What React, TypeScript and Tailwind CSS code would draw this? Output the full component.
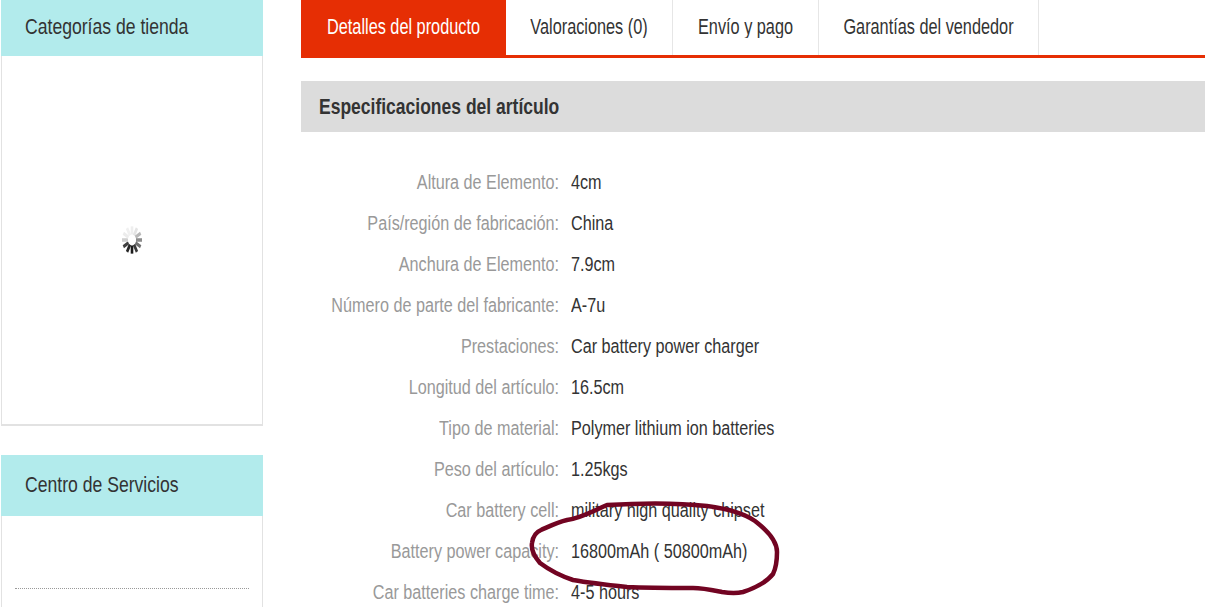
const specs = [
  ["Altura de Elemento:", "4cm"],
  ["País/región de fabricación:", "China"],
  ["Anchura de Elemento:", "7.9cm"],
  ["Número de parte del fabricante:", "A-7u"],
  ["Prestaciones:", "Car battery power charger"],
  ["Longitud del artículo:", "16.5cm"],
  ["Tipo de material:", "Polymer lithium ion batteries"],
  ["Peso del artículo:", "1.25kgs"],
  ["Car battery cell:", "military high quality chipset"],
  ["Battery power capacity:", "16800mAh ( 50800mAh)"],
  ["Car batteries charge time:", "4-5 hours"],
]

const tabs = [
  { label: "Detalles del producto", width: "w-[205px]", active: true },
  { label: "Valoraciones (0)", width: "w-[167px]" },
  { label: "Envío y pago", width: "w-[146px]" },
  { label: "Garantías del vendedor", width: "w-[220px]" },
]

const spinnerBars = [0, 30, 60, 90, 120, 150, 180, 210, 240, 270, 300, 330]
const spinnerShades = ["#eeeeee", "#e4e4e4", "#b8b8b8", "#8c8c8c", "#707070", "#3a3a3a", "#1c1c1c", "#262626", "#404040", "#d0d0d0", "#ececec", "#f0f0f0"]

function Spinner() {
  return (
    <svg width="22" height="30" viewBox="0 0 22 22" preserveAspectRatio="none">
      {spinnerBars.map((angle, i) => (
        <line
          key={angle}
          x1="11"
          y1="7"
          x2="11"
          y2="1"
          stroke={spinnerShades[i]}
          strokeWidth="2.6"
          transform={`rotate(${angle} 11 11)`}
        />
      ))}
    </svg>
  )
}

function SideHeader({ title, className }: { title: string; className: string }) {
  return (
    <div className={`${className} flex items-center bg-[#b2ebec] pl-[24px] text-[#333]`}>
      <span className="inline-block scale-y-[1.3] text-[17.6px]">{title}</span>
    </div>
  )
}

export default function App() {
  return (
    <div className="relative h-[607px] w-[1205px] overflow-hidden bg-white font-['Liberation_Sans',Arial,sans-serif]">
      <div className="flex">
        <aside className="ml-[1px] w-[262px] shrink-0">
          <div className="border-x border-b-2 border-[#e2e2e2]">
            <div className="-mx-px">
              <SideHeader title="Categorías de tienda" className="h-[56px] pb-[4px]" />
            </div>
            <div className="flex h-[368px] items-center justify-center">
              <Spinner />
            </div>
          </div>
          <div className="mt-[29px] h-[200px] border-x border-[#e2e2e2]">
            <div className="-mx-px">
              <SideHeader title="Centro de Servicios" className="h-[61px] pb-[2px]" />
            </div>
            <div className="mx-[13px] mt-[72px] border-t border-dotted border-[#999]" />
          </div>
        </aside>

        <main className="ml-[38px] min-w-0 flex-1">
          <div className="flex h-[58px] border-b-[3px] border-[#e62e04]">
            {tabs.map((tab) => (
              <div
                key={tab.label}
                className={`${tab.width} flex items-center justify-center pb-[2px] ${
                  tab.active ? "bg-[#e62e04] text-white" : "border-r border-[#e6e6e6] text-[#333]"
                }`}
              >
                <span className="inline-block scale-y-[1.3] text-[16.3px]">{tab.label}</span>
              </div>
            ))}
          </div>

          <div className="mt-[23px] flex h-[51px] items-center bg-[#dcdcdc] pb-[1px] pl-[18px] text-[#333]">
            <span className="inline-block scale-y-[1.3] text-[17.5px] font-bold">Especificaciones del artículo</span>
          </div>

          <div className="pt-[29px]">
            {specs.map(([label, value]) => (
              <div key={label} className="flex h-[41px] items-center text-[16.2px]">
                <div className="w-[258px] shrink-0 text-right text-[#999]">
                  <span className="inline-block origin-right scale-y-[1.3]">{label}</span>
                </div>
                <div className="ml-[12px] whitespace-nowrap text-[#333]">
                  <span className="inline-block scale-y-[1.3]">{value}</span>
                </div>
              </div>
            ))}
          </div>
        </main>
      </div>

      {/* hand drawn circle over the capacity row */}
      <svg className="absolute left-0 top-0" width="1205" height="607" viewBox="0 0 1205 607" fill="none">
        <path
          d="M607 505 C640 503 680 503 707 506 C730 509 745 514 755 521 C768 531 777 541 777 552 C777 562 776 568 773 574 C765 584 752 589 743 592 C735 594 728 593 722 592 C712 590 703 588 693 588 C670 588 648 588 627 587 C608 585 590 583 573 580 C558 575 548 569 540 563 C534 556 531 549 532 543 C533 536 536 532 541 530 C550 526 558 522 567 520 C582 518 595 510 607 505 Z"
          stroke="#720422"
          strokeWidth="4.5"
          strokeLinejoin="round"
        />
      </svg>
    </div>
  )
}
